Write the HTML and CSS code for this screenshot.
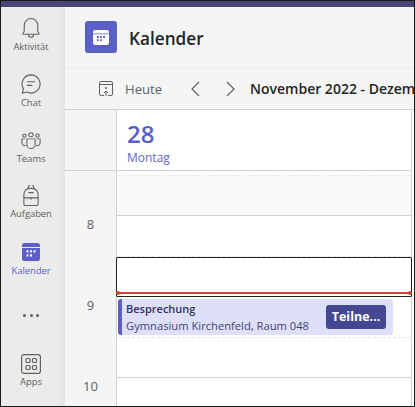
FILE: index.html
```html
<!DOCTYPE html>
<html>
<head>
  <meta charset="utf-8">
  <title>Kalender</title>
  <link rel="stylesheet" href="styles.css">
</head>
<body>
  <div class="app">
    <div class="topbar"></div>
    <div class="content">
      <nav class="rail">
        <div class="rail-item rail-activity">
          <svg width="18" height="22" viewBox="0 0 20 24" fill="none" stroke="#616161" stroke-width="1.2">
            <path d="M2.500 15.500V9a7.500 7.500 0 0 1 15 0v6.500l1.500 2.800a.5.5 0 0 1-.4.7H1.400a.5.5 0 0 1-.4-.7z"/>
            <path d="M7 19.200a3 3 0 0 0 6 0"/>
          </svg>
          <span>Aktivität</span>
        </div>
        <div class="rail-item rail-chat">
          <svg width="20" height="20" viewBox="0 0 22 22" fill="none" stroke="#616161" stroke-width="1.2">
            <path d="M11 1a10 10 0 1 1-4.600 18.900L1.500 21l1.200-4.700A10 10 0 0 1 11 1z"/>
            <path d="M7 8.500h8M7 12.500h5" stroke-linecap="round"/>
          </svg>
          <span>Chat</span>
        </div>
        <div class="rail-item rail-teams">
          <svg width="20" height="17" viewBox="0 0 22 21" preserveAspectRatio="none" fill="none" stroke="#616161" stroke-width="1.200">
            <circle cx="11" cy="3.500" r="2.500"/>
            <circle cx="3.800" cy="4.500" r="1.900"/>
            <circle cx="18.200" cy="4.500" r="1.900"/>
            <path d="M6.500 8.500h9v7.500a4.500 4.500 0 0 1-9 0z"/>
            <path d="M4.500 8.500H1v5a3.500 3.500 0 0 0 4.500 3.300M17.500 8.500H21v5a3.500 3.500 0 0 1-4.500 3.300"/>
          </svg>
          <span>Teams</span>
        </div>
        <div class="rail-item rail-tasks">
          <svg width="16" height="21" viewBox="0 0 18 22" preserveAspectRatio="none" fill="none" stroke="#616161" stroke-width="1.200">
            <path d="M6 4V2.500a3 3 0 0 1 6 0V4"/>
            <path d="M1 20V10a6.500 6.500 0 0 1 6.500-6.500h3A6.500 6.500 0 0 1 17 10v10a1.500 1.500 0 0 1-1.500 1.500h-13A1.500 1.500 0 0 1 1 20z"/>
            <path d="M6 8h6M1 13.500h16M9 12.500v3"/>
          </svg>
          <span>Aufgaben</span>
        </div>
        <div class="rail-item rail-calendar">
          <svg width="18" height="18" viewBox="0 2 18 16" preserveAspectRatio="none">
            <path d="M0 4.500A2.500 2.500 0 0 1 2.500 2h13A2.500 2.500 0 0 1 18 4.500v1H0z" fill="#5b5fc7"/>
            <path d="M0 6.500h18v9a2.500 2.500 0 0 1-2.500 2.500h-13A2.500 2.500 0 0 1 0 15.500z" fill="#5b5fc7"/>
            <path d="M4.500 8.500h2v2h-2zM8 8.500h2v2H8zM11.500 8.500h2v2h-2zM4.500 12h2v2h-2zM8 12h2v2H8z" fill="#fff"/>
          </svg>
          <span>Kalender</span>
        </div>
        <div class="rail-more">
          <i></i><i></i><i></i>
        </div>
        <div class="rail-item rail-apps">
          <svg width="20" height="20" viewBox="0 0 20 20" fill="none" stroke="#616161" stroke-width="1.200">
            <rect x=".6" y=".6" width="18.800" height="18.800" rx="2.500"/>
            <rect x="5" y="4.500" width="4" height="4" rx="1"/>
            <rect x="11.500" y="4.500" width="4" height="4" rx="1"/>
            <rect x="5" y="11.500" width="4" height="4" rx="1"/>
            <rect x="11.500" y="11.500" width="4" height="4" rx="1"/>
          </svg>
          <span>Apps</span>
        </div>
      </nav>

      <main class="main">
        <header class="title-bar">
          <div class="app-logo">
            <svg width="16" height="16" viewBox="0 0 18 18">
              <path d="M0 3.500A2.500 2.500 0 0 1 2.500 1h13A2.500 2.500 0 0 1 18 3.500V5H0z" fill="#fff"/>
              <path d="M0 6h18v9.500a2.500 2.500 0 0 1-2.500 2.500h-13A2.500 2.500 0 0 1 0 15.500z" fill="#fff"/>
              <path d="M4.500 8h2v2h-2zM8 8h2v2H8zM11.500 8h2v2h-2zM4.500 11.500h2v2h-2zM8 11.500h2v2H8z" fill="#5b5fc7"/>
            </svg>
          </div>
          <h1>Kalender</h1>
        </header>

        <div class="toolbar">
          <div class="today">
            <svg width="14" height="15" viewBox="0 0 14 15" fill="none" stroke="#616161">
              <path d="M5 14.500H2A1.500 1.500 0 0 1 .5 13V2A1.500 1.500 0 0 1 2 .5h10A1.500 1.500 0 0 1 13.500 2v11a1.500 1.500 0 0 1-1.500 1.500H9"/>
              <path d="M.5 3.500h13M7 15V10M5 12l2-2 2 2"/>
              <circle cx="7" cy="7" r=".6" fill="#616161"/>
            </svg>
            <span>Heute</span>
          </div>
          <svg class="chev chev-prev" width="10" height="16" viewBox="0 0 10 16" fill="none" stroke="#616161" stroke-width="1.200"><path d="M9 1 2 8l7 7"/></svg>
          <svg class="chev chev-next" width="10" height="16" viewBox="0 0 10 16" fill="none" stroke="#616161" stroke-width="1.200"><path d="m1 1 7 7-7 7"/></svg>
          <div class="range">November 2022 - Dezember 2022</div>
        </div>

        <div class="calendar">
          <div class="gutter">
            <div class="gutter-head"></div>
            <div class="gutter-allday"></div>
            <div class="hour">8</div>
            <div class="hour">9</div>
            <div class="hour">10</div>
          </div>
          <div class="day">
            <div class="day-head">
              <div class="day-num">28</div>
              <div class="day-name">Montag</div>
            </div>
            <div class="allday"></div>
            <div class="slot slot-half"></div>
            <div class="slot slot-selected">
              <div class="now-line"></div>
            </div>
            <div class="slot slot-half slot-event">
              <div class="event">
                <div class="event-text">
                  <div class="event-title">Besprechung</div>
                  <div class="event-place">Gymnasium Kirchenfeld, Raum 048</div>
                </div>
                <div class="join">Teilne...</div>
              </div>
            </div>
            <div class="slot slot-hour"></div>
            <div class="slot slot-half"></div>
          </div>
        </div>
      </main>
    </div>
  </div>
</body>
</html>
```

FILE: styles.css
```css
html, body {
  margin: 0;
  padding: 0;
}
body {
  width: 415px;
  height: 407px;
  overflow: hidden;
  font-family: 'Open Sans', 'Noto Sans', sans-serif;
  color: #242424;
}
.app {
  width: 415px;
  height: 407px;
  box-sizing: border-box;
  border: 1px solid #1a1a1a;
  display: flex;
  flex-direction: column;
  overflow: hidden;
}
.topbar {
  height: 6px;
  flex: none;
  background-color: #464775;
}
.content {
  flex: 1;
  display: flex;
  min-height: 0;
}

/* left rail */
.rail {
  width: 64px;
  flex: none;
  box-sizing: border-box;
  padding-right: 4px;
  display: flex;
  flex-direction: column;
  align-items: center;
  background: linear-gradient(to right, #ebebeb 85%, #e4e4e4);
}
.rail-item {
  display: flex;
  flex-direction: column;
  align-items: center;
}
.rail-item span {
  font-size: 9.5px;
  line-height: 12px;
  color: #616161;
  letter-spacing: -0.1px;
}
.rail-activity {
  margin-top: 10px;
}
.rail-activity span {
  margin-top: 2px;
}
.rail-chat {
  margin-top: 21px;
}
.rail-chat span {
  margin-top: 3px;
}
.rail-teams {
  margin-top: 23px;
}
.rail-teams span {
  margin-top: 4px;
}
.rail-tasks {
  margin-top: 20px;
}
.rail-tasks span {
  margin-top: 2px;
}
.rail-calendar {
  margin-top: 23px;
}
.rail-calendar span {
  color: #5b5fc7;
  margin-top: 4px;
}
.rail-more {
  display: flex;
  gap: 3.5px;
  margin-top: 37px;
}
.rail-more i {
  width: 3px;
  height: 3px;
  border-radius: 50%;
  background-color: #616161;
}
.rail-apps {
  margin-top: 37px;
}
.rail-apps span {
  margin-top: 2px;
}

/* main area */
.main {
  flex: 1;
  min-width: 0;
  display: flex;
  flex-direction: column;
  background-color: #f5f5f5;
}
.title-bar {
  height: 61px;
  flex: none;
  box-sizing: border-box;
  display: flex;
  align-items: center;
  padding-left: 20px;
  border-bottom: 1px solid #ebebeb;
}
.app-logo {
  width: 32px;
  height: 32px;
  border-radius: 3px;
  background-color: #5b5fc7;
  display: flex;
  align-items: center;
  justify-content: center;
}
.title-bar h1 {
  margin: 2px 0 0 12px;
  font-size: 17.2px;
  font-weight: 600;
  color: #242424;
}
.toolbar {
  height: 42px;
  flex: none;
  box-sizing: border-box;
  display: flex;
  align-items: center;
  padding-left: 34px;
  border-bottom: 1px solid #d1d1d1;
  white-space: nowrap;
  overflow: hidden;
}
.today {
  display: flex;
  align-items: center;
  gap: 12px;
  width: 91px;
  flex: none;
  font-size: 13.1px;
  color: #616161;
}
.chev {
  flex: none;
}
.chev-next {
  margin-left: 26px;
}
.range {
  margin-left: 14px;
  font-size: 14px;
  font-weight: 600;
  color: #242424;
}

/* calendar grid */
.calendar {
  flex: 1;
  min-height: 0;
  display: flex;
  background-color: #fff;
}
.gutter {
  width: 52px;
  flex: none;
  box-sizing: border-box;
  border-right: 1px solid #d1d1d1;
  background-color: #f5f5f5;
}
.gutter-head {
  height: 61px;
  box-sizing: border-box;
  border-bottom: 1px solid #d1d1d1;
}
.gutter-allday {
  height: 44px;
}
.hour {
  height: 81px;
  text-align: center;
  font-size: 13px;
  line-height: 18px;
  color: #616161;
}
.day {
  flex: 1;
  min-width: 0;
  margin-right: 2px;
  border-right: 1px solid #d1d1d1;
  background-color: #fff;
}
.day-head {
  height: 61px;
  box-sizing: border-box;
  padding: 7px 0 0 10px;
  border-bottom: 1px solid #d1d1d1;
  color: #5b5fc7;
}
.day-num {
  font-size: 24px;
  line-height: 33px;
  font-weight: 600;
}
.day-name {
  font-size: 12px;
  line-height: 16px;
  color: #6366cc;
}
.allday {
  height: 41px;
  box-sizing: border-box;
  background-color: #fafafa;
  border-top: 1px dashed #ebebeb;
  margin-top: 4px;
  border-bottom: 1px solid #d1d1d1;
}
.slot {
  height: 40px;
  box-sizing: border-box;
  position: relative;
}
.slot-half {
  border-bottom: 1px dashed #e6e6e6;
  height: 41px;
}
.slot-hour {
  border-bottom: 1px solid #d1d1d1;
}
.slot-selected {
  margin: 0 -1px;
  border: 1px solid #242424;
  border-radius: 1px;
}
.now-line {
  position: absolute;
  left: -1px;
  right: -1px;
  bottom: 2px;
  height: 2px;
  background-color: #c4462d;
}
.now-line::before,
.now-line::after {
  content: "";
  position: absolute;
  top: -1px;
  width: 4px;
  height: 4px;
  border-radius: 50%;
  background-color: #c4462d;
}
.now-line::before {
  left: 0;
}
.now-line::after {
  right: 0;
}
.slot-event {
  padding: 2px 18px 0 1px;
}
.event {
  height: 36px;
  box-sizing: border-box;
  display: flex;
  align-items: center;
  justify-content: space-between;
  background-color: #dee0fa;
  border-left: 4px solid #5b5fc7;
  border-radius: 3px;
  padding: 0 7px 0 4px;
}
.event-title {
  font-size: 11px;
  line-height: 16px;
  font-weight: 600;
  color: #30325f;
}
.event-place {
  font-size: 11.2px;
  line-height: 17px;
  color: #424570;
  white-space: nowrap;
}
.join {
  width: 60px;
  height: 24px;
  border-radius: 3px;
  background-color: #444791;
  color: #fff;
  font-size: 12.5px;
  font-weight: 700;
  line-height: 24px;
  text-align: center;
}
```
